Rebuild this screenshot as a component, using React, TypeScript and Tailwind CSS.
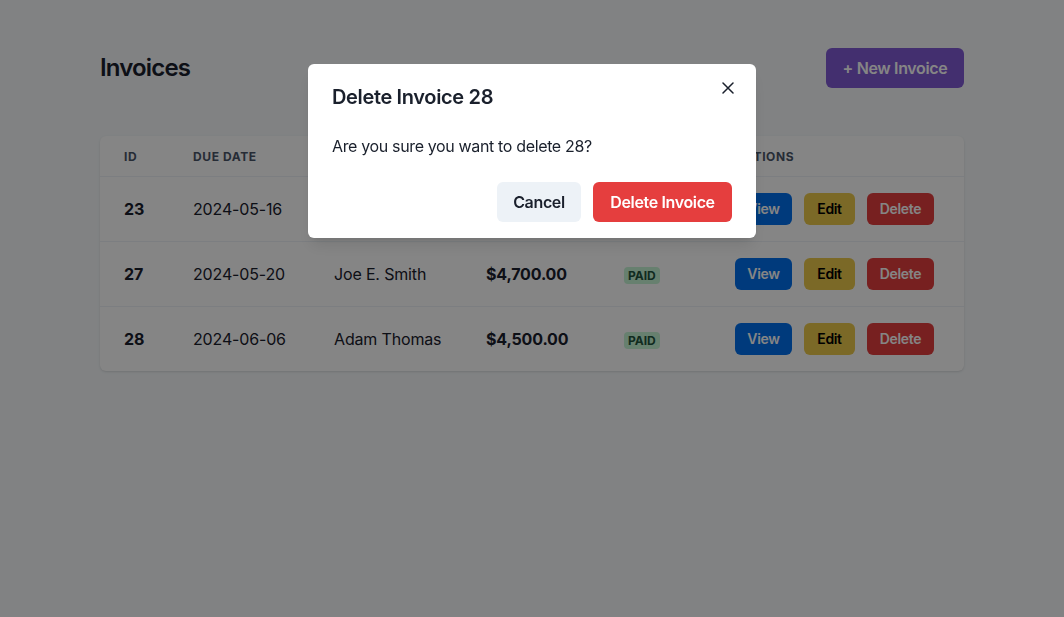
import React from 'react';

type Invoice = {
  id: number;
  dueDate: string;
  name: string;
  amount: string;
  status: string;
};

const INVOICES: Invoice[] = [
  { id: 23, dueDate: '2024-05-16', name: 'Jane Doe', amount: '$3,200.00', status: 'PAID' },
  { id: 27, dueDate: '2024-05-20', name: 'Joe E. Smith', amount: '$4,700.00', status: 'PAID' },
  { id: 28, dueDate: '2024-06-06', name: 'Adam Thomas', amount: '$4,500.00', status: 'PAID' },
];

const COLUMNS = [
  { label: 'ID', width: 'w-[69px]' },
  { label: 'Due Date', width: 'w-[141px]' },
  { label: 'Name', width: 'w-[152px]' },
  { label: 'Amount', width: 'w-[138px]' },
  { label: 'Status', width: 'w-[111px]' },
  { label: 'Actions', width: '' },
];

const InvoiceRow = ({ invoice }: { invoice: Invoice }) => {
  return (
    <tr className="border-t border-[#edf2f7] whitespace-nowrap tracking-[-0.01em]">
      <td className="px-6 py-4 font-bold">{invoice.id}</td>
      <td className="px-6 py-4">{invoice.dueDate}</td>
      <td className="px-6 py-4">{invoice.name}</td>
      <td className="px-6 py-4 font-bold">{invoice.amount}</td>
      <td className="px-6 py-4">
        <span className="rounded-sm bg-[#c6f6d5] px-1 py-px text-xs font-bold uppercase tracking-normal text-[#22543d]">
          {invoice.status}
        </span>
      </td>
      <td className="px-6 py-4">
        <div className="flex gap-3 tracking-[-0.022em]">
          <button className="h-8 w-[57px] rounded-md bg-[#0070ee] text-sm font-semibold text-white">
            View
          </button>
          <button className="h-8 w-[51px] rounded-md bg-[#ecc94b] text-sm font-semibold text-black">
            Edit
          </button>
          <button className="h-8 w-[67px] rounded-md bg-[#e53e3e] text-sm font-semibold text-white">
            Delete
          </button>
        </div>
      </td>
    </tr>
  );
};

const DeleteModal = () => {
  return (
    <div className="fixed inset-0 flex justify-center bg-[rgba(0,0,0,0.48)]">
      <div className="relative mt-16 h-fit w-[448px] rounded-md bg-white shadow-lg">
        <h2 className="px-6 pb-[14px] pt-[18px] text-xl font-semibold leading-[30px] text-[#1a202c]">
          Delete Invoice 28
        </h2>
        <button className="absolute right-3 top-2 flex h-8 w-8 items-center justify-center rounded-md text-[#1a202c]">
          <svg width="12" height="12" viewBox="0 0 12 12" fill="none">
            <path d="M1 1L11 11M11 1L1 11" stroke="currentColor" strokeWidth="1.5" strokeLinecap="round" />
          </svg>
        </button>
        <p className="px-6 py-2 text-base leading-6 text-[#1a202c]">
          Are you sure you want to delete 28?
        </p>
        <div className="flex justify-end gap-3 px-6 py-4">
          <button className="h-10 w-[84px] rounded-md bg-[#edf2f7] font-semibold text-[#1a202c]">
            Cancel
          </button>
          <button className="h-10 w-[139px] rounded-md bg-[#e53e3e] font-semibold text-white">
            Delete Invoice
          </button>
        </div>
      </div>
    </div>
  );
};

const App = () => {
  return (
    <div className="min-h-[617px] bg-[#f7fafc] font-['Inter',sans-serif] tracking-[-0.022em] text-[#1a202c]">
      <div className="mx-auto w-[864px] pt-12">
        <div className="mb-12 flex items-center justify-between">
          <h1 className="text-2xl font-semibold tracking-[-0.035em]">Invoices</h1>
          <button className="h-10 w-[138px] rounded-md bg-[#805ad5] font-semibold text-white">
            + New Invoice
          </button>
        </div>

        <div className="overflow-hidden rounded-md bg-white shadow-sm">
          <table className="w-full table-fixed text-left">
            <thead>
              <tr>
                {COLUMNS.map((col) => (
                  <th
                    key={col.label}
                    className={`${col.width} px-6 pb-[11px] pt-[13px] text-xs font-bold uppercase leading-4 tracking-wider text-[#4a5568]`}
                  >
                    {col.label}
                  </th>
                ))}
              </tr>
            </thead>
            <tbody>
              {INVOICES.map((invoice) => (
                <InvoiceRow key={invoice.id} invoice={invoice} />
              ))}
            </tbody>
          </table>
        </div>
      </div>

      <DeleteModal />
    </div>
  );
};

export default App;
